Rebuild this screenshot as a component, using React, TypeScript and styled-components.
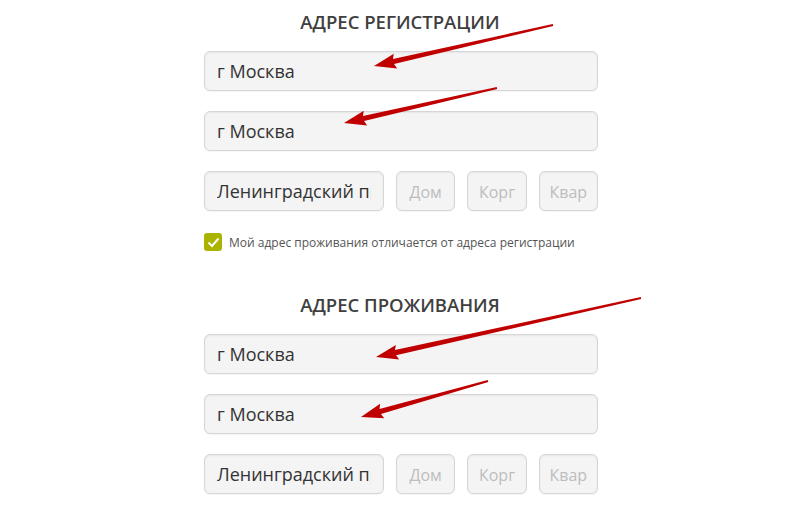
import React from "react";
import styled, { createGlobalStyle } from "styled-components";

const Global = createGlobalStyle`
  body {
    margin: 0;
    background: #fff;
    font-family: "Open Sans", "Noto Sans", sans-serif;
  }
`

const Page = styled.div`
  position: relative;
  width: 800px;
  height: 513px;
  overflow: hidden;
`

const Section = styled.section<{ top: number }>`
  padding-top: ${(p) => p.top}px;
`

const Title = styled.h2`
  margin: 0 0 17px 0;
  text-align: center;
  font-size: 18.5px;
  line-height: 24px;
  font-weight: 600;
  color: #3f3f3f;
`

const Form = styled.div`
  width: 394px;
  margin-left: 204px;
  display: flex;
  flex-direction: column;
  gap: 20px;
`

const Field = styled.input`
  box-sizing: border-box;
  width: 100%;
  height: 40px;
  padding: 0 12px;
  border: 1px solid #d6d6d6;
  border-radius: 6px;
  background: #f4f4f4;
  box-shadow: inset 0 1px 2px rgba(0, 0, 0, 0.06), 0 1px 1px rgba(0, 0, 0, 0.04);
  font-family: "Open Sans", "Noto Sans", sans-serif;
  font-size: 18px;
  color: #333;
  outline: none;
  &::placeholder {
    color: #bdbdbd;
    font-size: 16px;
  }
`

const SmallField = styled(Field)`
  padding: 0 8px;
  text-align: center;
`

const Row = styled.div`
  display: grid;
  grid-template-columns: 180px 1fr 1fr 1fr;
  gap: 12px;
`

const Check = styled.label`
  display: flex;
  align-items: center;
  gap: 7px;
  margin-top: 2px;
  font-size: 12px;
  color: #555;
`

const Box = styled.span`
  width: 18px;
  height: 18px;
  border-radius: 3px;
  background: #a9b300;
  display: flex;
  align-items: center;
  justify-content: center;
  flex-shrink: 0;
`

const Overlay = styled.svg`
  position: absolute;
  left: 0;
  top: 0;
  pointer-events: none;
`

type ArrowProps = { x1: number; y1: number; x2: number; y2: number };

function Arrow({ x1, y1, x2, y2 }: ArrowProps) {
  const dx = x2 - x1;
  const dy = y2 - y1;
  const len = Math.hypot(dx, dy);
  const ux = dx / len;
  const uy = dy / len;
  const nx = -uy;
  const ny = ux;
  const head = 20;
  const hw = 7.5;
  const bx = x2 - ux * head;
  const by = y2 - uy * head;
  const pts = [
    [x1 + nx * 1, y1 + ny * 1],
    [bx + nx * 2.6, by + ny * 2.6],
    [bx + nx * hw - ux * 2, by + ny * hw - uy * 2],
    [x2, y2],
    [bx - nx * hw - ux * 2, by - ny * hw - uy * 2],
    [bx - nx * 2.6, by - ny * 2.6],
    [x1 - nx * 1, y1 - ny * 1],
  ]
    .map((p) => p.join(","))
    .join(" ");
  return <polygon points={pts} fill="#c00000" />;
}

function Address({ title, top, children }: { title: string; top: number; children?: React.ReactNode }) {
  return (
    <Section top={top}>
      <Title>{title}</Title>
      <Form>
        <Field defaultValue="г Москва" readOnly />
        <Field defaultValue="г Москва" readOnly />
        <Row>
          <Field defaultValue="Ленинградский проспект" readOnly />
          <SmallField placeholder="Дом" />
          <SmallField placeholder="Корг" />
          <SmallField placeholder="Квар" />
        </Row>
        {children}
      </Form>
    </Section>
  );
}

function App() {
  return (
    <Page>
      <Global />
      <Address title="АДРЕС РЕГИСТРАЦИИ" top={10}>
        <Check>
          <Box>
            <svg width="13" height="11" viewBox="0 0 13 11">
              <path d="M1.5 5.5 L5 9 L11.5 1.5" stroke="#fff" strokeWidth="2" fill="none" />
            </svg>
          </Box>
          Мой адрес проживания отличается от адреса регистрации
        </Check>
      </Address>
      <Address title="АДРЕС ПРОЖИВАНИЯ" top={42} />
      <Overlay width="800" height="513">
        <Arrow x1={553} y1={25} x2={374} y2={66} />
        <Arrow x1={497} y1={88} x2={344} y2={123} />
        <Arrow x1={641} y1={298} x2={376} y2={357} />
        <Arrow x1={488} y1={381} x2={361} y2={417} />
      </Overlay>
    </Page>
  );
}

export default App;
